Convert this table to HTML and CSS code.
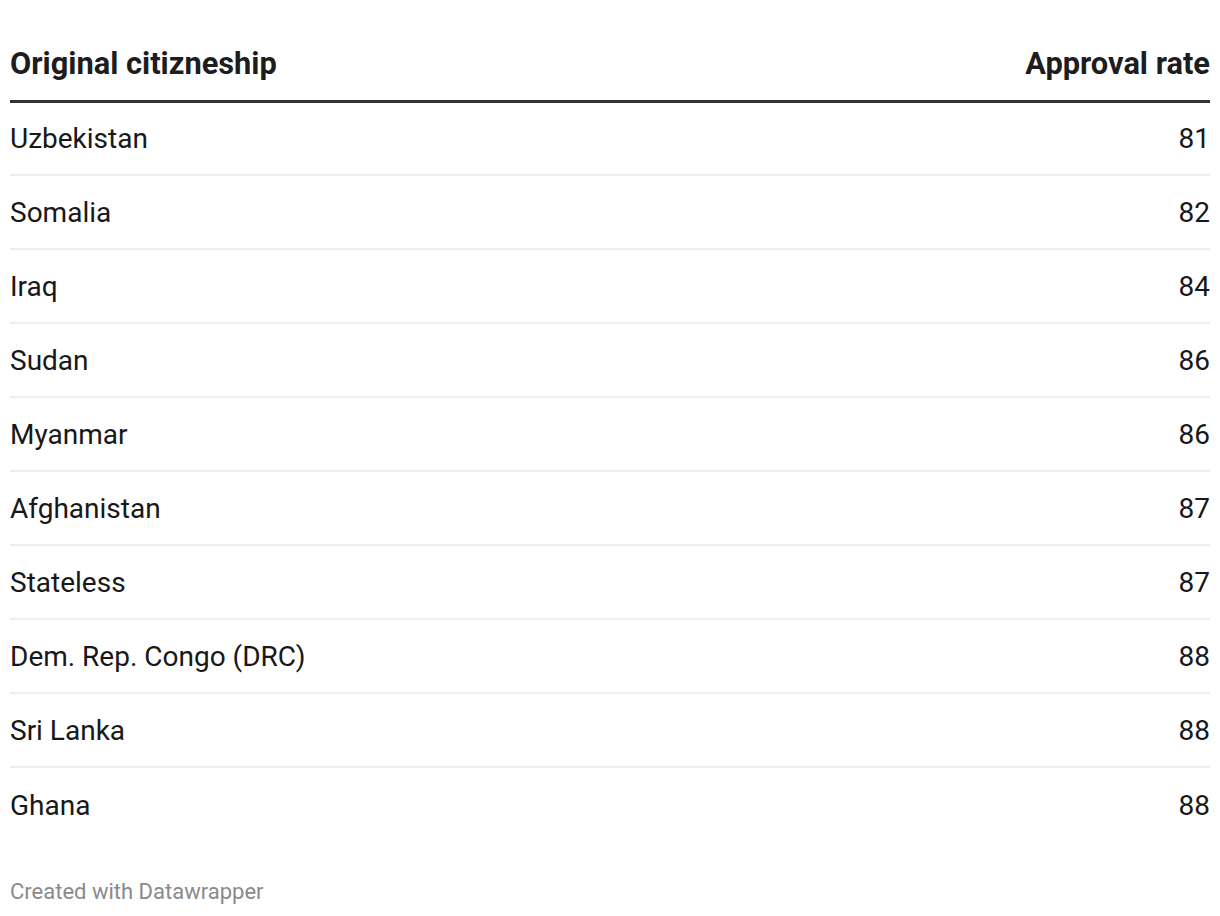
FILE: index.html
```html
<!DOCTYPE html>
<html>
<head>
<meta charset="utf-8">
<link rel="stylesheet" href="styles.css">
</head>
<body>
<div class="chart">
  <table class="tbl">
    <thead>
      <tr><th class="c-name">Original citizneship</th><th class="c-val">Approval rate</th></tr>
    </thead>
    <tbody>
      <tr><td class="c-name">Uzbekistan</td><td class="c-val">81</td></tr>
      <tr><td class="c-name">Somalia</td><td class="c-val">82</td></tr>
      <tr><td class="c-name">Iraq</td><td class="c-val">84</td></tr>
      <tr><td class="c-name">Sudan</td><td class="c-val">86</td></tr>
      <tr><td class="c-name">Myanmar</td><td class="c-val">86</td></tr>
      <tr><td class="c-name">Afghanistan</td><td class="c-val">87</td></tr>
      <tr><td class="c-name">Stateless</td><td class="c-val">87</td></tr>
      <tr><td class="c-name">Dem. Rep. Congo (DRC)</td><td class="c-val">88</td></tr>
      <tr><td class="c-name">Sri Lanka</td><td class="c-val">88</td></tr>
      <tr><td class="c-name">Ghana</td><td class="c-val">88</td></tr>
    </tbody>
  </table>
  <div class="footer">Created with Datawrapper</div>
</div>
</body>
</html>
```
FILE: styles.css
```css
html, body {
  margin: 0;
  padding: 0;
  background: #fff;
}
body {
  font-family: Roboto, "Liberation Sans", sans-serif;
  color: #181818;
}
.chart {
  padding: 0 10px;
}
.tbl {
  width: 100%;
  border-collapse: collapse;
  margin-top: 35px;
}
.tbl th {
  font-size: 30.8px;
  font-weight: 700;
  color: #1d1d1d;
  height: 66px;
  padding: 0 0 6px 0;
  vertical-align: middle;
  border-bottom: 3px solid #333;
  box-sizing: border-box;
  line-height: 1;
}
.tbl td {
  font-size: 28px;
  height: 74px;
  padding: 2px 0 0 0;
  border-bottom: 2px solid #eeeeee;
  box-sizing: border-box;
  line-height: 1;
}
.tbl tbody tr:last-child td {
  border-bottom: none;
}
.c-name { text-align: left; }
.c-val { text-align: right; }
.footer {
  font-size: 22px;
  color: #8a8a8a;
  margin-top: 38px;
}
```
